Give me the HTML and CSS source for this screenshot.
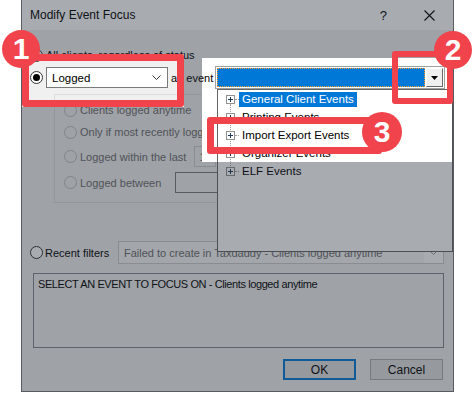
FILE: index.html
```html
<!DOCTYPE html>
<html lang="en">
<head>
    <meta charset="UTF-8">
    <meta name="viewport" content="width=device-width, initial-scale=1.0">
    <title>Modify Event Focus</title>
    <link rel="stylesheet" href="styles.css">
</head>
<body>
    <div class="dialog">
        <div class="titlebar">
            <span class="title">Modify Event Focus</span>
            <span class="help">?</span>
            <svg class="close" width="11" height="11" viewBox="0 0 11 11">
                <path d="M0.5 0.5L10.5 10.5M10.5 0.5L0.5 10.5" stroke="#000" stroke-width="1.1" fill="none"/>
            </svg>
        </div>

        <div class="content">
            <div class="row all-row">
                <span class="radio"></span>
                <span>All clients, regardless of status</span>
            </div>

            <div class="event-row">
                <span class="radio checked"></span>
                <div class="select">
                    <span>Logged</span>
                    <svg width="9" height="5" viewBox="0 0 9 5">
                        <path d="M0.5 0.5L4.5 4.5L8.5 0.5" stroke="#333" fill="none"/>
                    </svg>
                </div>
                <span class="an-event">an event</span>
                <div class="event-combo">
                    <div class="event-field"></div>
                    <div class="drop-btn">
                        <svg width="7" height="4" viewBox="0 0 7 4"><path d="M0 0H7L3.5 4Z" fill="#000"/></svg>
                    </div>
                </div>
            </div>

            <div class="group">
                <div class="opt"><span class="radio off"></span>Clients logged anytime</div>
                <div class="opt"><span class="radio off"></span>Only if most recently logged</div>
                <div class="opt tall"><span class="radio off"></span>Logged within the last<span class="spin">1</span></div>
                <div class="opt tall"><span class="radio off"></span>Logged between<span class="date"></span></div>
            </div>

            <div class="row recent-row">
                <span class="radio"></span>
                <span>Recent filters</span>
                <div class="recent-combo">
                    <span>Failed to create in Taxdaddy - Clients logged anytime</span>
                    <div class="recent-arrow">
                        <svg width="9" height="5" viewBox="0 0 9 5">
                            <path d="M0.5 0.5L4.5 4.5L8.5 0.5" stroke="#999" fill="none"/>
                        </svg>
                    </div>
                </div>
            </div>

            <div class="summary">SELECT AN EVENT TO FOCUS ON - Clients logged anytime</div>

            <div class="buttons">
                <button class="btn default">OK</button>
                <button class="btn">Cancel</button>
            </div>
        </div>

        <!-- dropdown opened from the event combo -->
        <div class="glare"></div>
        <ul class="event-list">
            <li class="selected"><svg class="expander" width="9" height="9" viewBox="0 0 9 9"><rect x="0.5" y="0.5" width="8" height="8" fill="#fff" stroke="#919191"/><path d="M2 4.5H7M4.5 2V7" stroke="#1e395b"/></svg><span class="label">General Client Events</span></li>
            <li><svg class="expander" width="9" height="9" viewBox="0 0 9 9"><rect x="0.5" y="0.5" width="8" height="8" fill="#fff" stroke="#919191"/><path d="M2 4.5H7M4.5 2V7" stroke="#1e395b"/></svg><span class="label">Printing Events</span></li>
            <li><svg class="expander" width="9" height="9" viewBox="0 0 9 9"><rect x="0.5" y="0.5" width="8" height="8" fill="#fff" stroke="#919191"/><path d="M2 4.5H7M4.5 2V7" stroke="#1e395b"/></svg><span class="label">Import Export Events</span></li>
            <li><svg class="expander" width="9" height="9" viewBox="0 0 9 9"><rect x="0.5" y="0.5" width="8" height="8" fill="#fff" stroke="#919191"/><path d="M2 4.5H7M4.5 2V7" stroke="#1e395b"/></svg><span class="label">Organizer Events</span></li>
            <li><svg class="expander" width="9" height="9" viewBox="0 0 9 9"><rect x="0.5" y="0.5" width="8" height="8" fill="#fff" stroke="#919191"/><path d="M2 4.5H7M4.5 2V7" stroke="#1e395b"/></svg><span class="label">ELF Events</span></li>
        </ul>

        <!-- screenshot annotations -->
        <div class="dim"></div>
        <div class="mark mark-1"></div>
        <div class="mark mark-2"></div>
        <div class="mark mark-3"></div>
        <div class="badge badge-1">1</div>
        <div class="badge badge-2">2</div>
        <div class="badge badge-3">3</div>
    </div>
</body>
</html>
```

FILE: styles.css
```css
body {
    margin: 0;
    background-color: #fff;
    font-family: "Liberation Sans", Arial, sans-serif;
    font-size: 11px;
    color: #000;
}

.dialog {
    position: relative;
    margin-left: 21px;
    width: 433px;
    height: 392px;
    box-sizing: border-box;
    background-color: #f0f0f0;
    border: 1px solid #7a7a7a;
    border-top: none;
}

/* title bar */
.titlebar {
    display: flex;
    align-items: center;
    height: 30px;
    padding-left: 8px;
    background-color: #fff;
    font-size: 12px;
}
.title {
    flex: 1;
}
.help {
    font-size: 13px;
    margin-right: 37px;
}
.close {
    margin-right: 18px;
}

/* dialog body */
.content {
    padding: 17px 9px 0 8px;
}
.row {
    display: flex;
    align-items: center;
    gap: 3px;
}
.all-row {
    height: 16px;
}

.radio {
    flex: none;
    width: 13px;
    height: 13px;
    box-sizing: border-box;
    border: 1px solid #333;
    border-radius: 50%;
    background-color: #fff;
    position: relative;
}
.radio.checked::after {
    content: "";
    position: absolute;
    left: 2px;
    top: 2px;
    width: 7px;
    height: 7px;
    border-radius: 50%;
    background-color: #000;
}
.radio.off {
    border-color: #bcbcbc;
    background-color: #f0f0f0;
}

.event-row {
    position: relative;
    z-index: 2;
    display: grid;
    grid-template-columns: 16px 122px 47px 230px;
    align-items: center;
    height: 23px;
    margin-top: 3px;
}
.select {
    display: flex;
    align-items: center;
    justify-content: space-between;
    height: 21px;
    box-sizing: border-box;
    padding: 0 6px 0 5px;
    border: 1px solid #7a7a7a;
    background-color: #fff;
    font-size: 11.5px;
}
.an-event {
    padding-left: 3px;
}
.event-combo {
    display: flex;
    height: 23px;
    box-sizing: border-box;
    padding: 1px;
    border: 1px solid #a0a0a0;
    background-color: #fff;
}
.event-field {
    flex: 1;
    background-color: #0078d7;
    outline: 1px dotted #ff9a28;
    outline-offset: -1px;
}
.drop-btn {
    display: flex;
    align-items: center;
    justify-content: center;
    width: 17px;
    margin-left: 1px;
    box-sizing: border-box;
    background-color: #f0f0f0;
    border: 1px solid;
    border-color: #fff #696969 #696969 #fff;
}

/* group box */
.group {
    margin: 5px 0 0 24px;
    height: 109px;
    box-sizing: border-box;
    padding: 7px 0 0 9px;
    border: 1px solid #dcdcdc;
    color: #6d6d6d;
}
.opt {
    display: flex;
    align-items: center;
    gap: 3px;
    height: 16px;
    margin-bottom: 6px;
}
.opt.tall {
    height: 21px;
    margin-bottom: 5px;
}
.spin {
    width: 22px;
    height: 21px;
    box-sizing: border-box;
    margin-left: 5px;
    padding: 4px 0 0 4px;
    border: 1px solid #cccccc;
    background-color: #f0f0f0;
}
.date {
    width: 120px;
    height: 21px;
    box-sizing: border-box;
    margin-left: 11px;
    border: 1px solid #7a7a7a;
    background-color: #f0f0f0;
}

/* recent filters */
.recent-row {
    height: 23px;
    margin-top: 38px;
    gap: 2px;
}
.recent-combo {
    display: flex;
    align-items: center;
    justify-content: space-between;
    width: 326px;
    height: 23px;
    box-sizing: border-box;
    margin-left: auto;
    padding-left: 5px;
    border: 1px solid #cccccc;
    background-color: #f7f7f7;
    color: #6d6d6d;
}
.recent-arrow {
    display: flex;
    align-items: center;
    justify-content: center;
    width: 19px;
    height: 100%;
    background-color: #fff;
}

.summary {
    height: 75px;
    box-sizing: border-box;
    margin: 9px 0 0 3px;
    padding: 4px 4px;
    border: 1px solid #828790;
    letter-spacing: -0.4px;
}

.buttons {
    display: flex;
    justify-content: flex-end;
    gap: 14px;
    margin: 11px 1px 0 0;
}
.btn {
    width: 73px;
    height: 21px;
    padding: 0;
    border: 1px solid #adadad;
    background-color: #e1e1e1;
    font-family: inherit;
    font-size: 12px;
    color: #000;
}
.btn.default {
    border: 2px solid #0078d7;
}

/* open dropdown list */
.glare {
    position: absolute;
    z-index: 1;
    left: 180px;
    top: 58px;
    width: 250px;
    height: 104px;
    background-color: #fff;
}
.event-list {
    position: absolute;
    z-index: 3;
    left: 195px;
    top: 89px;
    width: 236px;
    height: 163px;
    box-sizing: border-box;
    margin: 0;
    padding: 0;
    list-style: none;
    border: 1px solid #646464;
    background-color: #fff;
    font-size: 11.5px;
}
.event-list::before {
    content: "";
    position: absolute;
    left: 12px;
    top: 14px;
    height: 62px;
    border-left: 1px dotted #a0a0a0;
}
.event-list li {
    position: relative;
    display: flex;
    align-items: center;
    height: 18px;
    padding-left: 8px;
}
.event-list li::before {
    content: "";
    position: absolute;
    left: 17px;
    top: 9px;
    width: 4px;
    border-top: 1px dotted #a0a0a0;
}
.expander {
    position: relative;
    z-index: 1;
}
.label {
    margin-left: 4px;
    padding: 1px 3px 2px;
}
.selected .label {
    background-color: #0078d7;
    color: #fff;
}

/* annotations */
.dim {
    position: absolute;
    z-index: 4;
    left: -1px;
    top: 0;
    width: 433px;
    height: 392px;
    background-color: rgba(37, 45, 57, 0.4);
    clip-path: path(evenodd, "M0 0H433V392H0Z M1 54H163V107H1Z M181 58H431V162H181Z");
}
.mark {
    position: absolute;
    z-index: 5;
    box-sizing: border-box;
    border: 7px solid #f0434b;
    border-radius: 3px;
}
.mark-1 {
    left: 0;
    top: 54px;
    width: 162px;
    height: 53px;
}
.mark-2 {
    left: 370px;
    top: 51px;
    width: 61px;
    height: 53px;
    border-width: 6px;
}
.mark-3 {
    left: 185px;
    top: 117px;
    width: 175px;
    height: 37px;
}
.badge {
    position: absolute;
    z-index: 6;
    width: 38px;
    height: 38px;
    border-radius: 50%;
    background-color: #f0434b;
    color: #fff;
    font-size: 30px;
    font-weight: bold;
    line-height: 38px;
    text-align: center;
}
.badge-1 {
    left: -20px;
    top: 30px;
}
.badge-2 {
    left: 412px;
    top: 31px;
}
.badge-3 {
    left: 340px;
    top: 112px;
    width: 40px;
    height: 40px;
    line-height: 40px;
}
```
